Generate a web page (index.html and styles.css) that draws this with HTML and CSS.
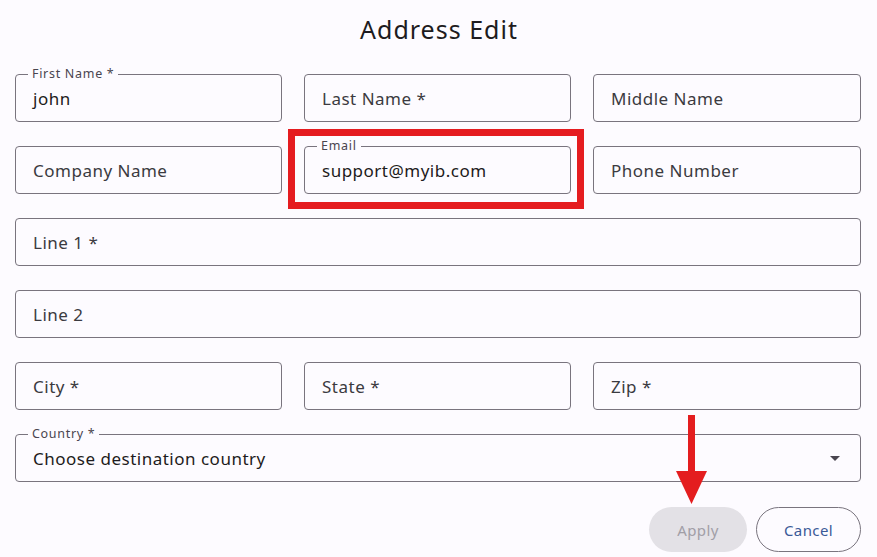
FILE: index.html
```html
<!DOCTYPE html>
<html lang="en">
<head>
<meta charset="utf-8">
<title>Address Edit</title>
<link rel="stylesheet" href="styles.css">
</head>
<body>
<div class="dialog">
  <h1 class="title">Address Edit</h1>
  <div class="form">
    <div class="field filled"><span class="float">First Name *</span><span class="value">john</span></div>
    <div class="field"><span class="ph">Last Name *</span></div>
    <div class="field"><span class="ph">Middle Name</span></div>

    <div class="field"><span class="ph">Company Name</span></div>
    <div class="field filled highlight"><span class="float">Email</span><span class="value">support@myib.com</span></div>
    <div class="field"><span class="ph">Phone Number</span></div>

    <div class="field wide"><span class="ph">Line 1 *</span></div>
    <div class="field wide"><span class="ph">Line 2</span></div>

    <div class="field"><span class="ph">City *</span></div>
    <div class="field"><span class="ph">State *</span></div>
    <div class="field"><span class="ph">Zip *</span></div>

    <div class="field filled wide select"><span class="float">Country *</span><span class="value">Choose destination country</span><span class="caret"></span></div>
  </div>
  <div class="actions">
    <button class="btn apply" disabled>Apply</button>
    <button class="btn cancel">Cancel</button>
    <svg class="arrow" width="32" height="90" viewBox="0 0 32 90">
      <rect x="12" y="0" width="7" height="58" fill="#e41d1f"/>
      <polygon points="0,56 31,56 15.5,89" fill="#e41d1f"/>
    </svg>
  </div>
</div>
</body>
</html>
```
FILE: styles.css
```css
* { box-sizing: border-box; }
html, body { margin: 0; padding: 0; }
body {
  background: #fdfbff;
  font-family: "Noto Sans", "Open Sans", sans-serif;
  color: #1d1b20;
  width: 877px;
  height: 557px;
  overflow: hidden;
}
.dialog {
  padding: 12px 16px 0 15px;
  position: relative;
}
.title {
  margin: 0;
  text-align: center;
  font-size: 25px;
  font-weight: 400;
  line-height: 34px;
  letter-spacing: 1px;
  color: #1d1b20;
  padding-left: 2px;
}
.form {
  margin-top: 28px;
  display: grid;
  grid-template-columns: 267px 267px 268px;
  column-gap: 22px;
  row-gap: 24px;
}
.field {
  position: relative;
  height: 48px;
  border: 1px solid #79747e;
  border-radius: 4px;
  display: flex;
  align-items: center;
  padding: 0 17px;
  font-size: 17px;
}
.field.wide { grid-column: 1 / 4; }
.ph { color: #3b3a40; letter-spacing: 0.5px; }
.value { color: #1d1b20; letter-spacing: 0.5px; }
.float {
  position: absolute;
  left: 12px;
  top: -9px;
  padding: 0 4px;
  background: #fdfbff;
  font-size: 12.5px;
  line-height: 16px;
  letter-spacing: 0.7px;
  color: #49454f;
}
.highlight::after {
  content: "";
  position: absolute;
  left: -17px;
  right: -14px;
  top: -18px;
  bottom: -16px;
  border: 7px solid #e51c20;
  pointer-events: none;
}
.select { justify-content: space-between; }
.caret {
  width: 0;
  height: 0;
  border-left: 5px solid transparent;
  border-right: 5px solid transparent;
  border-top: 5px solid #49454f;
  margin-right: 3px;
}
.actions {
  position: relative;
  margin-top: 25px;
  display: flex;
  justify-content: flex-end;
  gap: 9px;
}
.btn {
  height: 45px;
  border-radius: 23px;
  font-family: inherit;
  font-size: 15px;
  letter-spacing: 0.4px;
  padding: 0;
}
.apply {
  width: 98px;
  background: #e3e1e6;
  border: none;
  color: #a19ea6;
}
.cancel {
  width: 105px;
  background: transparent;
  border: 1px solid #79747e;
  color: #3b5a98;
}
.arrow {
  position: absolute;
  right: 153px;
  top: -92px;
}
```
